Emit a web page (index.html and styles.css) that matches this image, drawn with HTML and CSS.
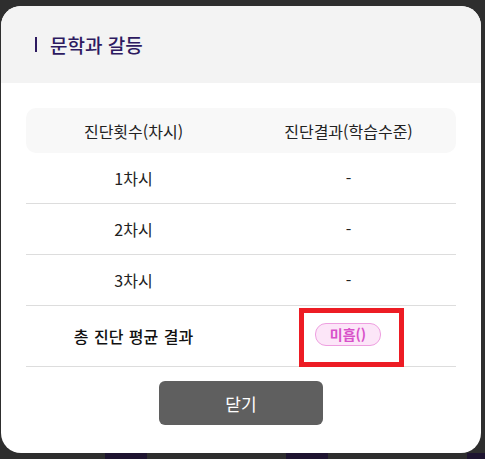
FILE: index.html
```html
<!DOCTYPE html>
<html lang="ko">
<head>
	<meta charset="utf-8">
	<title>진단 결과</title>
	<link rel="stylesheet" href="styles.css">
</head>
<body>

	<div class="modal">
		<div class="modal-head">
			<h2 class="modal-title">문학과 갈등</h2>
		</div>

		<div class="modal-body">
			<div class="result-table">
				<div class="row row-head">
					<div class="cell">진단횟수(차시)</div>
					<div class="cell">진단결과(학습수준)</div>
				</div>
				<div class="row">
					<div class="cell">1차시</div>
					<div class="cell">-</div>
				</div>
				<div class="row">
					<div class="cell">2차시</div>
					<div class="cell">-</div>
				</div>
				<div class="row">
					<div class="cell">3차시</div>
					<div class="cell">-</div>
				</div>
				<div class="row row-total">
					<div class="cell total-label">총 진단 평균 결과</div>
					<div class="cell">
						<span class="badge">미흡()</span>
						<span class="mark"></span>
					</div>
				</div>
			</div>

			<button class="close-btn">닫기</button>
		</div>
	</div>

</body>
</html>
```

FILE: styles.css
```css
body {
	margin: 0;
	height: 459px;
	overflow: hidden;
	font-family: "Noto Sans CJK KR", "Noto Sans", sans-serif;
	background:
		linear-gradient(#1e1430, #1e1430) 105px 453px / 42px 6px no-repeat,
		linear-gradient(#1e1430, #1e1430) 286px 453px / 42px 6px no-repeat,
		linear-gradient(#1e1430, #1e1430) 467px 453px / 18px 6px no-repeat,
		#2e2e2e;
}
.modal {
	width: 480px;
	height: 447px;
	margin: 6px 0 0 1px;
	background-color: #ffffff;
	border-radius: 20px;
	overflow: hidden;
	display: flex;
	flex-direction: column;
}
.modal-head {
	height: 77px;
	background-color: #f3f3f3;
	display: flex;
	align-items: center;
	padding-left: 34px;
}
.modal-title {
	margin: 0;
	font-size: 19px;
	font-weight: 500;
	color: #2d1a60;
	display: flex;
	align-items: center;
}
.modal-title::before {
	content: "";
	width: 2px;
	height: 15px;
	background-color: #2d1a60;
	margin-right: 13px;
}
.modal-body {
	padding: 25px 25px 0 25px;
	display: flex;
	flex-direction: column;
	align-items: center;
}
.result-table {
	width: 430px;
	margin-bottom: 14px;
}
.row {
	display: grid;
	grid-template-columns: 1fr 1fr;
	height: 50px;
	border-bottom: 1px solid #dddddd;
	font-size: 16px;
	color: #222222;
}
.row-head {
	height: 45px;
	border-bottom: none;
	background-color: #f8f8f8;
	border-radius: 10px;
}
.row-total {
	height: 60px;
}
.cell {
	display: flex;
	align-items: center;
	justify-content: center;
	position: relative;
}
.total-label {
	font-weight: 500;
	color: #111111;
	word-spacing: 1px;
}
.badge {
	height: 21px;
	width: 64px;
	margin: -4px 0 0 -1px;
	border: 1px solid #ee9fe0;
	background-color: #fce6f8;
	border-radius: 11px;
	color: #d851c9;
	font-size: 14px;
	font-weight: 700;
	display: flex;
	align-items: center;
	justify-content: center;
}
.mark {
	position: absolute;
	left: 58px;
	top: 2px;
	width: 95px;
	height: 49px;
	border: 5px solid #ed1c24;
}
.close-btn {
	width: 164px;
	height: 44px;
	border: none;
	border-radius: 6px;
	background-color: #5f5f5f;
	color: #ffffff;
	font-family: "Noto Sans CJK KR", "Noto Sans", sans-serif;
	font-size: 17px;
}
```
